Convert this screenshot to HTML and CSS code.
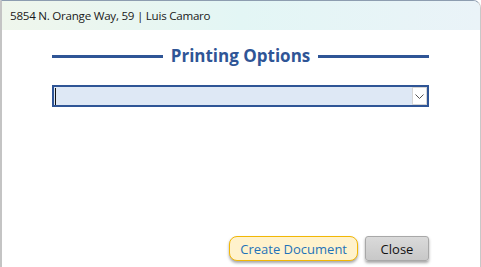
FILE: index.html
```html
<!DOCTYPE html>
<html lang="en">
<head>
  <meta charset="UTF-8">
  <meta name="viewport" content="width=device-width, initial-scale=1.0">
  <title>Printing Options</title>
  <link rel="stylesheet" href="styles.css">
</head>
<body>
  <div class="window">
    <header class="titlebar">5854 N. Orange Way, 59 | Luis Camaro</header>
    <div class="content">
      <div class="section-title">
        <span class="rule"></span>
        <h1>Printing Options</h1>
        <span class="rule"></span>
      </div>
      <div class="combo">
        <span class="caret"></span>
        <span class="combo-btn">
          <svg width="9" height="5" viewBox="0 0 9 5"><path d="M0.5 0.5 L4.5 4.5 L8.5 0.5" fill="none" stroke="#555" stroke-width="1"/></svg>
        </span>
      </div>
      <div class="spacer"></div>
      <div class="actions">
        <button class="btn btn-primary">Create Document</button>
        <button class="btn btn-close">Close</button>
      </div>
    </div>
  </div>
</body>
</html>
```

FILE: styles.css
```css
html,
body {
  height: 100%;
  overflow: hidden;
}

body {
  margin: 0;
  background: #fff;
  font: 12px "Open Sans", "Noto Sans", sans-serif;
}

.window {
  display: flex;
  flex-direction: column;
  height: 267px;
  box-sizing: border-box;
  border-left: 2px solid #c4c4c4;
  border-top: 1px solid #8d9db0;
  border-right: 1px solid #c8c8c8;
  border-top-right-radius: 8px;
  background: #fff;
}

.titlebar {
  height: 29px;
  padding-left: 8px;
  line-height: 29px;
  font-size: 11.6px;
  letter-spacing: -0.25px;
  color: #1a1a1a;
  background: linear-gradient(to right, #eff6ec 0%, #e3f6f5 50%, #eaf3f8 100%);
  border-top-right-radius: 7px;
}

.content {
  flex: 1;
  display: flex;
  flex-direction: column;
  padding: 0 51px 6px 50px;
}

.section-title {
  display: flex;
  align-items: center;
  gap: 8px;
  margin-top: 13px;
}

.section-title .rule {
  flex: 1;
  height: 3px;
  background: #2f5596;
}

.section-title h1 {
  margin: 0;
  font: bold 17px "Open Sans", "Noto Sans", sans-serif;
  color: #2f5596;
  line-height: 26px;
}

.combo {
  display: flex;
  justify-content: space-between;
  align-items: center;
  height: 22px;
  margin-top: 16px;
  box-sizing: border-box;
  border: 2px solid #2f5596;
  background: #dee8f5;
}

.caret {
  width: 1px;
  height: 17px;
  margin-left: 1px;
  background: #111;
}

.combo-btn {
  display: flex;
  justify-content: center;
  align-items: center;
  width: 15px;
  height: 18px;
  box-sizing: border-box;
  border: 1px solid #d6d6d6;
  background: #fff;
}

.spacer {
  flex: 1;
}

.actions {
  display: flex;
  justify-content: flex-end;
  gap: 7px;
}

.btn {
  height: 25px;
  font: 13px "Open Sans", "Noto Sans", sans-serif;
  box-shadow: 0 2px 3px rgba(0, 0, 0, .35);
  cursor: pointer;
}

.btn-primary {
  padding: 0 10px;
  border: 1px solid #f2b705;
  border-radius: 8px;
  background: #fff2cc;
  color: #1f72b8;
}

.btn-close {
  width: 64px;
  border: 1px solid #a8a8a8;
  border-radius: 3px;
  background: linear-gradient(to bottom, #dadada, #c8c8c8);
  color: #111;
}
```
